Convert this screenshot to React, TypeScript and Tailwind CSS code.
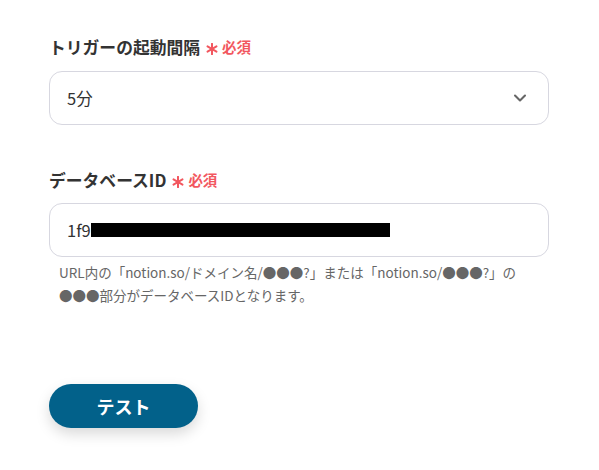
import { ChevronDown } from "lucide-react";

function RequiredMark() {
  return (
    <span className="ml-[6px] inline-flex items-center text-[14.5px] font-bold leading-[24px] text-[#f2575f]">
      <svg viewBox="0 0 12 12" className="mr-[4px] mt-[3px] h-[12px] w-[12px]" stroke="currentColor" strokeWidth="2" strokeLinecap="round">
        <line x1="6" y1="0.8" x2="6" y2="11.2" />
        <line x1="1.5" y1="3.4" x2="10.5" y2="8.6" />
        <line x1="1.5" y1="8.6" x2="10.5" y2="3.4" />
      </svg>
      必須
    </span>
  );
}

export default function App() {
  return (
    <div
      className="w-[599px] h-[470px] bg-white px-[49px] pt-[35px] text-[#333]"
      style={{ fontFamily: '"Noto Sans CJK JP", "Noto Sans", sans-serif' }}
    >
      {/* トリガーの起動間隔 */}
      <div className="flex h-[24px] items-center text-[16.8px] font-bold leading-[24px]">
        トリガーの起動間隔
        <RequiredMark />
      </div>
      <div className="mt-[12px] flex h-[54px] w-[500px] items-center justify-between rounded-[13px] border border-[#d7d7e0] bg-white pl-[17px] pr-[18px] text-[16.5px] leading-[24px] text-[#333]">
        <span>5分</span>
        <ChevronDown className="h-5 w-5 text-[#666]" strokeWidth={2.5} />
      </div>

      {/* データベースID */}
      <div className="mt-[43px] flex h-[24px] items-center text-[16.8px] font-bold leading-[24px]">
        データベースID
        <RequiredMark />
      </div>
      <div className="mt-[11px] flex h-[54px] w-[500px] items-center rounded-[13px] border border-[#d7d7e0] bg-white pl-[17px] text-[16.5px] leading-[24px] text-[#333]">
        <span>1f9</span>
        <span className="h-[14px] w-[299px] bg-black" />
      </div>
      <p className="mt-[4px] pl-[10px] text-[13.5px] leading-[23px] text-[#666]">
        URL内の「notion.so/ドメイン名/●●●?」または「notion.so/●●●?」の
        <br />
        ●●●部分がデータベースIDとなります。
      </p>

      <div className="mt-[77px]">
        <button className="h-[44px] w-[149px] rounded-full bg-[#02618a] text-[18px] font-bold leading-[24px] text-white shadow-[0_6px_14px_rgba(0,0,0,0.15)]">
          テスト
        </button>
      </div>
    </div>
  );
}
